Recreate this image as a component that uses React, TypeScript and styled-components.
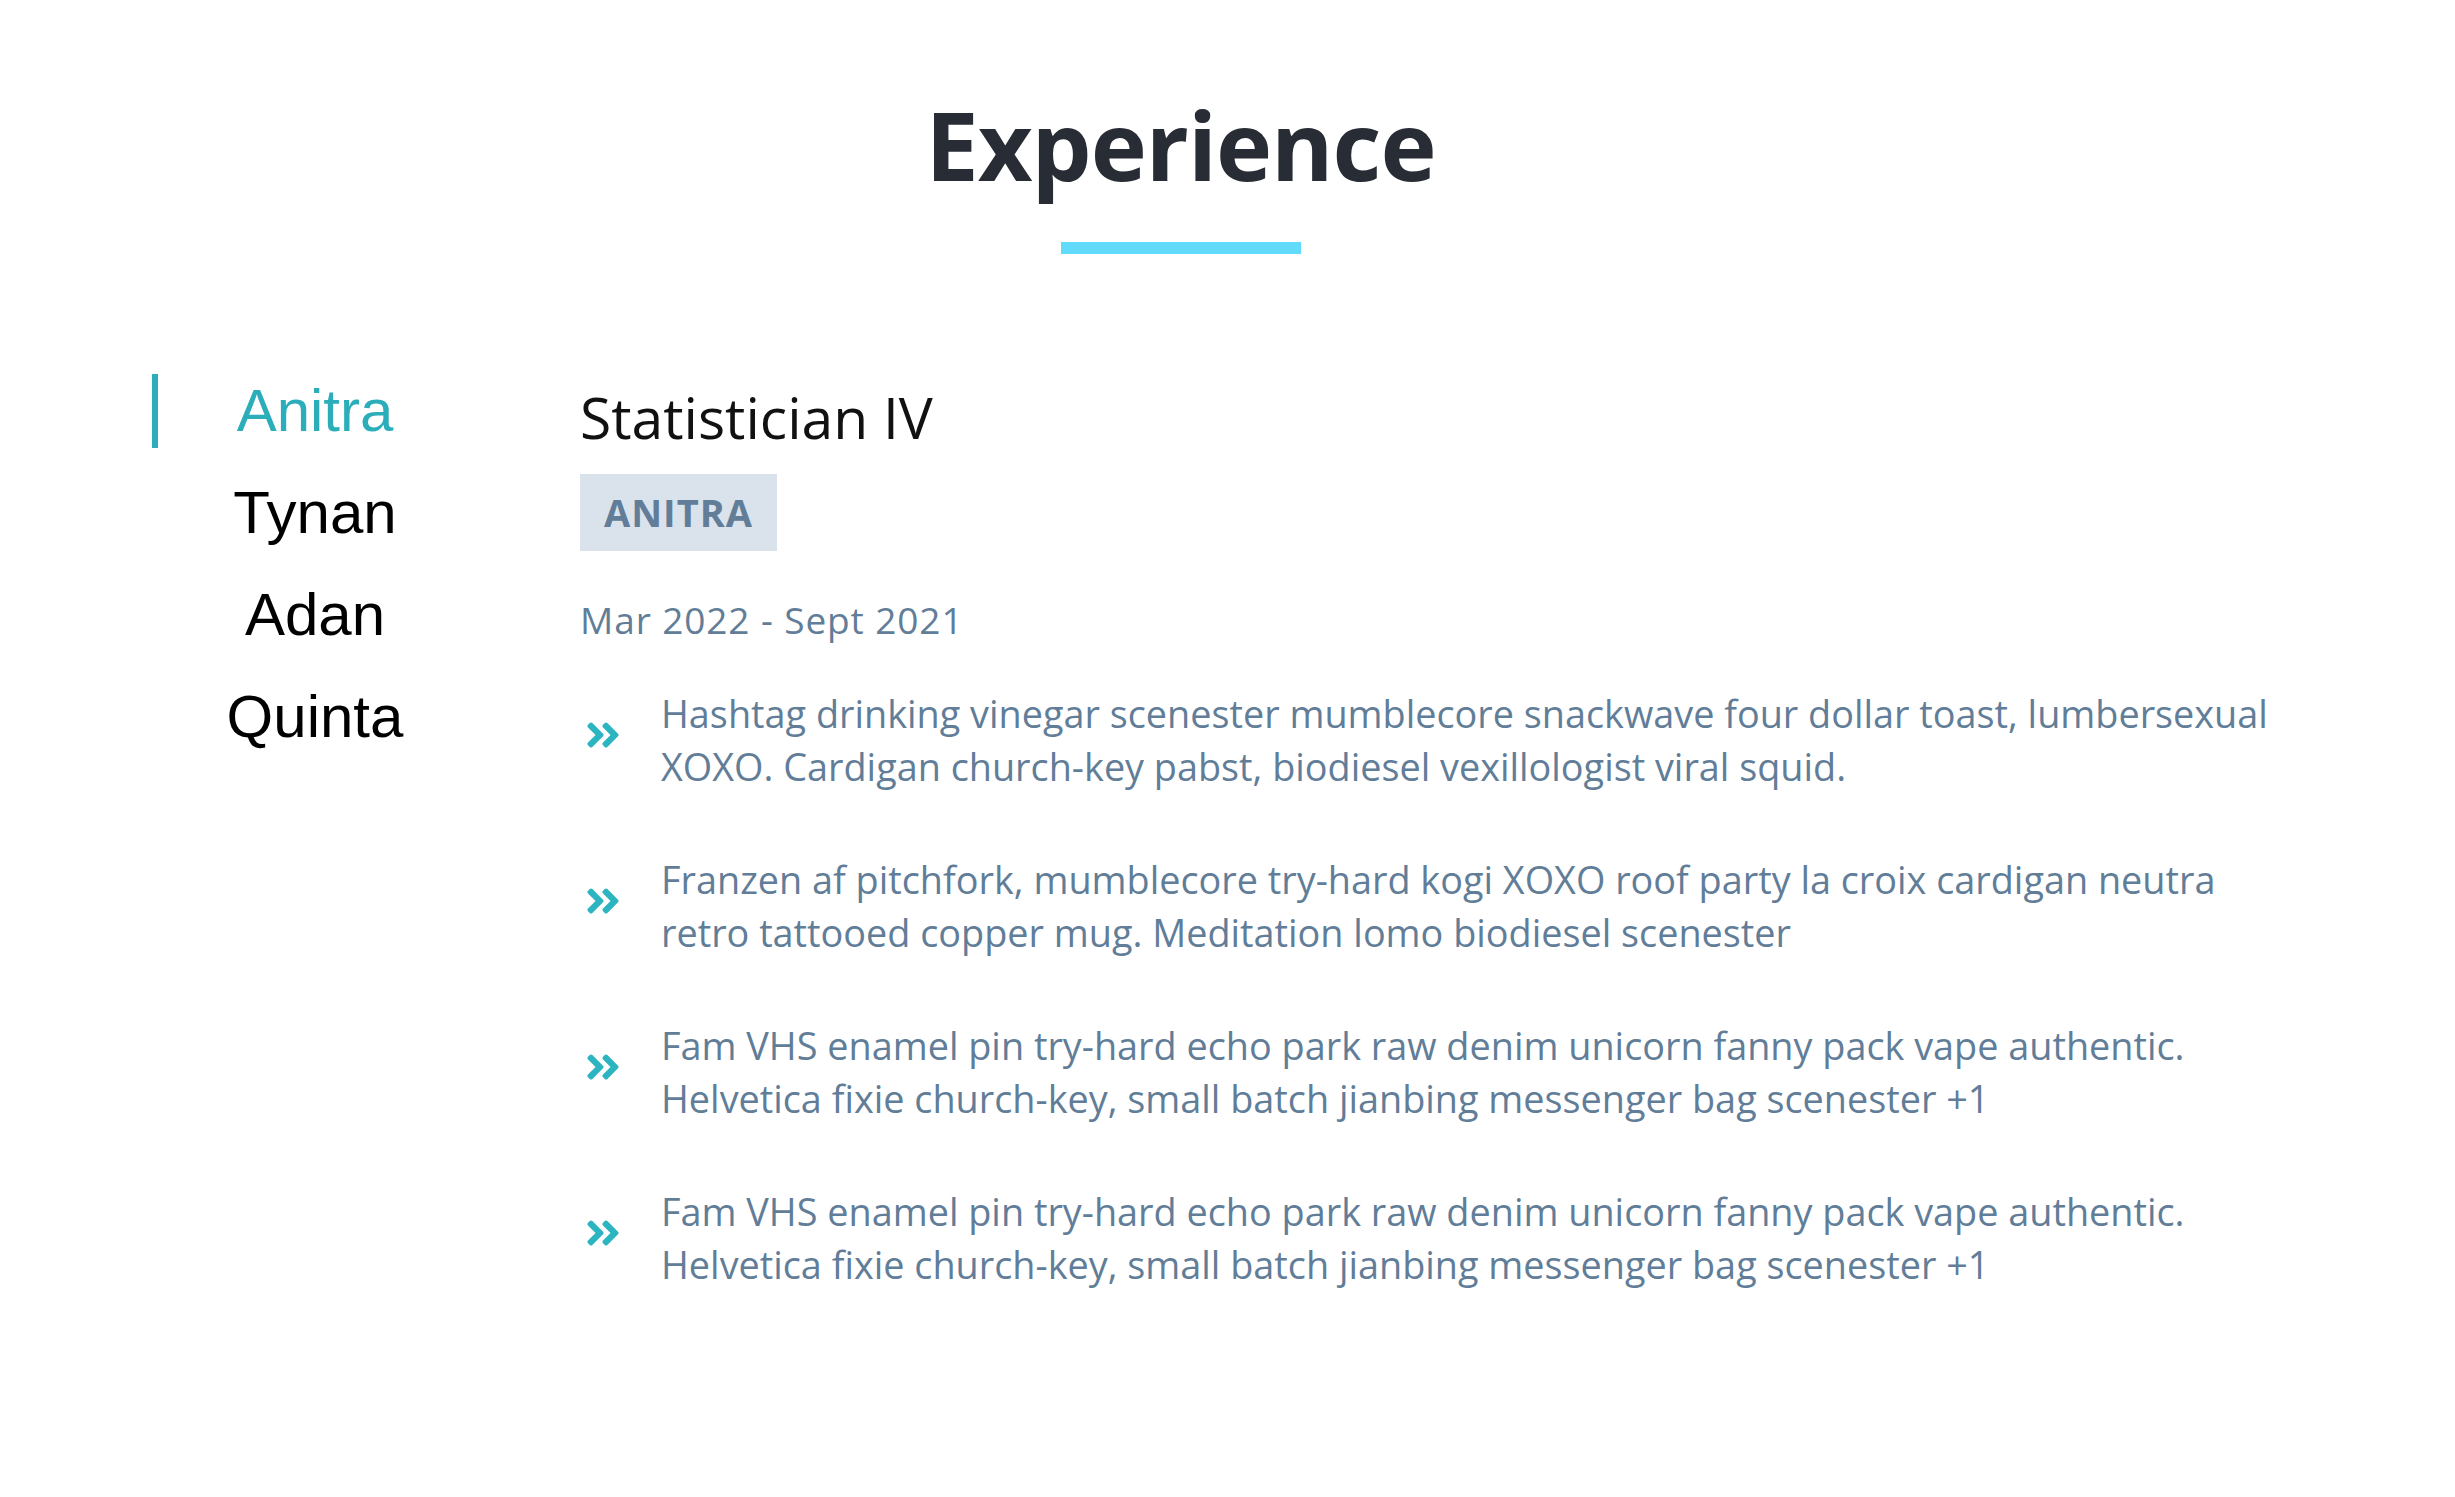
import React, { useState } from "react";
import styled, { createGlobalStyle } from "styled-components";
import { FaAngleDoubleRight } from "react-icons/fa";

const GlobalStyle = createGlobalStyle`
  html, body { margin: 0; padding: 0; background: #ffffff; }
  body { font-family: "Open Sans", "Noto Sans", sans-serif; }
  * { box-sizing: border-box; }
`;

const Section = styled.section`
  width: 2361px;
  padding-top: 97px;
  padding-bottom: 120px;
`;

const TitleBlock = styled.div`
  display: flex;
  flex-direction: column;
  align-items: center;
`;

const Title = styled.h2`
  margin: 0;
  font-family: "Open Sans", sans-serif;
  font-weight: 700;
  font-size: 95px;
  line-height: 95px;
  letter-spacing: -1px;
  color: #282c34;
`;

const Underline = styled.div`
  width: 240px;
  height: 12px;
  margin-top: 50px;
  background: #61dafb;
`;

const Jobs = styled.div`
  display: grid;
  grid-template-columns: 320px 1fr;
  column-gap: 108px;
  width: 2133px;
  margin: 120px 0 0 152px;
`;

const BtnColumn = styled.div`
  display: flex;
  flex-direction: column;
  align-items: stretch;
  gap: 28px;
`;

const JobButton = styled.button<{ $active: boolean }>`
  display: block;
  background: transparent;
  border: none;
  border-left: 6px solid ${(p) => (p.$active ? "#2caeba" : "transparent")};
  padding: 7px 0;
  margin: 0;
  font-family: "Liberation Sans", Arial, sans-serif;
  font-size: 60px;
  line-height: 60px;
  text-align: center;
  color: ${(p) => (p.$active ? "#2caeba" : "#000000")};
  cursor: pointer;
`;

const Info = styled.article`
  display: flex;
  flex-direction: column;
  align-items: flex-start;
`;

const JobTitle = styled.h3`
  margin: 15px 0 29px;
  font-family: "Open Sans", sans-serif;
  font-weight: 400;
  font-size: 57px;
  line-height: 56px;
  color: #111111;
`;

const Company = styled.h4`
  margin: 0;
  padding: 0 24px;
  height: 77px;
  font-family: "Open Sans", sans-serif;
  font-weight: 700;
  font-size: 38px;
  line-height: 77px;
  letter-spacing: 1px;
  color: #617d98;
  background: #dae2ec;
`;

const JobDate = styled.p`
  margin: 42px 0 40px;
  font-family: "Open Sans", sans-serif;
  font-size: 37px;
  line-height: 54px;
  letter-spacing: 0.9px;
  color: #617d98;
`;

const Duty = styled.div`
  display: grid;
  grid-template-columns: auto 1fr;
  column-gap: 38px;
  align-items: center;
  width: 100%;
  margin-bottom: 60px;
  padding-left: 3px;
`;

const DutyIcon = styled(FaAngleDoubleRight)`
  color: #2cb5c0;
  font-size: 40px;
  margin-bottom: 11px;
`;

const DutyText = styled.p`
  margin: 0;
  font-family: "Open Sans", sans-serif;
  font-size: 37.8px;
  line-height: 53px;
  color: #617d98;
`;

const jobs = [
  {
    company: "Anitra",
    title: "Statistician IV",
    dates: "Mar 2022 - Sept 2021",
    duties: [
      "Hashtag drinking vinegar scenester mumblecore snackwave four dollar toast, lumbersexual XOXO. Cardigan church-key pabst, biodiesel vexillologist viral squid.",
      "Franzen af pitchfork, mumblecore try-hard kogi XOXO roof party la croix cardigan neutra retro tattooed copper mug. Meditation lomo biodiesel scenester",
      "Fam VHS enamel pin try-hard echo park raw denim unicorn fanny pack vape authentic. Helvetica fixie church-key, small batch jianbing messenger bag scenester +1",
      "Fam VHS enamel pin try-hard echo park raw denim unicorn fanny pack vape authentic. Helvetica fixie church-key, small batch jianbing messenger bag scenester +1",
    ],
  },
  { company: "Tynan", title: "", dates: "", duties: [] },
  { company: "Adan", title: "", dates: "", duties: [] },
  { company: "Quinta", title: "", dates: "", duties: [] },
];

export default function App() {
  const [value, setValue] = useState(0);
  const job = jobs[0];
  return (
    <>
      <GlobalStyle />
      <Section>
        <TitleBlock>
          <Title>Experience</Title>
          <Underline />
        </TitleBlock>
        <Jobs>
          <BtnColumn>
            {jobs.map((j, i) => (
              <JobButton key={j.company} $active={i === value} onClick={() => setValue(i)}>
                {j.company}
              </JobButton>
            ))}
          </BtnColumn>
          <Info>
            <JobTitle>{job.title}</JobTitle>
            <Company>{job.company.toUpperCase()}</Company>
            <JobDate>{job.dates}</JobDate>
            {job.duties.map((d, i) => (
              <Duty key={i}>
                <DutyIcon />
                <DutyText>{d}</DutyText>
              </Duty>
            ))}
          </Info>
        </Jobs>
      </Section>
    </>
  );
}
